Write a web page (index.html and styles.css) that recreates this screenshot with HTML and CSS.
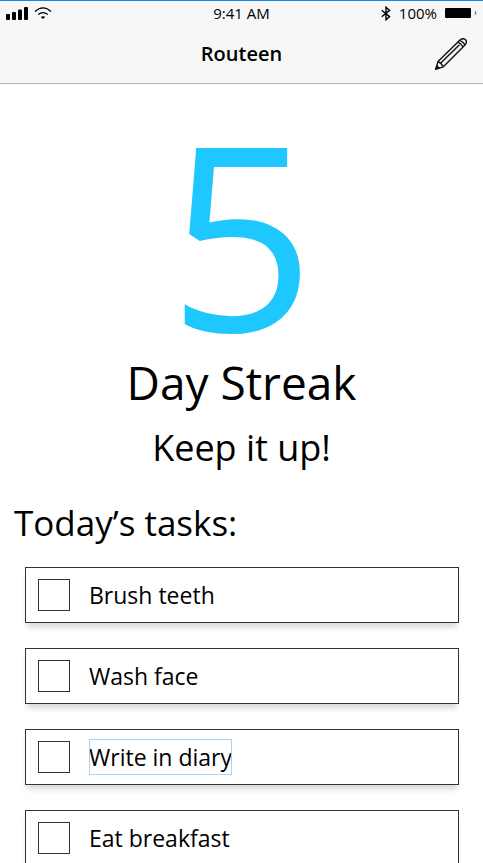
FILE: index.html
```html
<!DOCTYPE html>
<html lang="en">
<head>
<meta charset="utf-8">
<meta name="viewport" content="width=device-width, initial-scale=1">
<title>Routeen</title>
<link rel="stylesheet" href="styles.css">
</head>
<body>
<div class="screen">
  <header class="top">
    <div class="status">
      <div class="status-left">
        <svg width="22" height="13" viewBox="0 0 22 13" aria-hidden="true"><rect x="0" y="7" width="4" height="6" rx="1"/><rect x="6" y="5" width="4" height="8" rx="1"/><rect x="12" y="2.500" width="4" height="10.500" rx="1"/><rect x="18" y="0" width="4" height="13" rx="1"/></svg>
        <svg width="18" height="12" viewBox="0 0 18 12" fill="none" stroke="#000" stroke-width="1.300" aria-hidden="true"><path d="M1 4.600Q9-2.800 17 4.600M4.200 7.600Q9 3.600 13.800 7.600"/><path d="M6.800 9.900Q9 8.500 11.200 9.900L9 12Z" fill="#000" stroke="none"/></svg>
      </div>
      <span class="time">9:41 AM</span>
      <div class="status-right">
        <svg width="10" height="15" viewBox="0 0 10 15" fill="none" stroke="#000" stroke-width="1.400" aria-hidden="true"><path d="M.7 4.200 8.600 10.600 5 13.800V1.200L8.600 4.400.7 10.800"/></svg>
        <span class="percent">100%</span>
        <svg width="32" height="10" viewBox="0 0 32 10" aria-hidden="true"><rect width="26" height="10" rx="1"/><path d="M29.800 2.500Q33 5 29.800 7.500Z" fill="#777"/></svg>
      </div>
    </div>
    <div class="nav">
      <h1 class="title">Routeen</h1>
      <button class="edit" type="button" aria-label="Edit">
        <svg width="32" height="32" viewBox="0 0 32 32" fill="none" stroke="#111" stroke-width="1.400" stroke-linejoin="round" aria-hidden="true"><path d="M.8 31.200 3 23.500 25 2Q28-.5 30.500 1.700 32.500 4 30 7L8.300 28.800Z"/><path d="M3 23.500Q6.600 25 8.300 28.800M5.500 25.300 24.500 6.800M22.800 4.200Q26.400 5.500 28 9M24.800 2.300Q28.500 3.600 30 7"/><path d="M.8 31.200 1.800 27.700 4.300 30.200Z" fill="#111"/></svg>
      </button>
    </div>
  </header>
  <main class="content">
    <section class="streak">
      <p class="count">5</p>
      <p class="label">Day Streak</p>
      <p class="cheer">Keep it up!</p>
    </section>
    <h2 class="heading">Today’s tasks:</h2>
    <ul class="tasks">
      <li><label class="task"><input class="check" type="checkbox"><span class="name">Brush teeth</span></label></li>
      <li><label class="task"><input class="check" type="checkbox"><span class="name">Wash face</span></label></li>
      <li><label class="task"><input class="check" type="checkbox"><span class="name selected">Write in diary</span></label></li>
      <li><label class="task"><input class="check" type="checkbox"><span class="name">Eat breakfast</span></label></li>
    </ul>
  </main>
</div>
</body>
</html>
```
FILE: styles.css
```css
* { box-sizing: border-box; }
body, h1, h2, p, ul { margin: 0; padding: 0; }
body {
  background: #fff;
  color: #000;
  font-family: "Open Sans", "Noto Sans", sans-serif;
}
.screen {
  height: 100vh;
  overflow-y: auto;
  scrollbar-width: none;
}
.top {
  position: sticky;
  top: 0;
  z-index: 1;
  background: #f7f7f7;
  border-top: 1px solid #1a86e0;
  border-bottom: 1px solid #b2b2b2;
}
.status {
  display: grid;
  grid-template-columns: 1fr auto 1fr;
  align-items: center;
  height: 24px;
  padding: 0 6px;
  font-size: 15px;
  line-height: 24px;
}
.status svg { display: block; }
.status-left { display: flex; align-items: center; gap: 6px; }
.status-right { display: flex; align-items: center; justify-content: flex-end; gap: 8px; }
.nav {
  display: grid;
  grid-template-columns: 1fr auto 1fr;
  align-items: center;
  height: 58px;
  padding: 0 16px;
}
.title {
  grid-column: 2;
  font-size: 20px;
  line-height: 58px;
  font-weight: 600;
}
.edit {
  justify-self: end;
  padding: 0;
  border: 0;
  background: none;
}
.edit svg { display: block; }
.streak { padding-top: 24px; text-align: center; }
.count {
  color: #1ec8ff;
  font-size: 256px;
  line-height: 248px;
}
.label { font-size: 46px; line-height: 52px; }
.cheer { font-size: 36px; line-height: 80px; }
.heading {
  padding-left: 14px;
  font-size: 35px;
  line-height: 70px;
  font-weight: 400;
}
.tasks {
  display: grid;
  gap: 25px;
  padding: 9px 24px 25px 25px;
  list-style: none;
}
.task {
  display: flex;
  align-items: center;
  gap: 19px;
  height: 56px;
  padding: 0 12px;
  border: 1px solid #333;
  background: #fff;
  box-shadow: 0 6px 6px -2px rgba(0, 0, 0, .16);
}
.check {
  appearance: none;
  flex: none;
  width: 32px;
  height: 32px;
  margin: 0;
  border: 1px solid #333;
  background: #fff;
}
.check:checked { background: #1ec8ff; }
.name {
  font-size: 23px;
  line-height: 36px;
}
.selected { outline: 1px solid #a9d3f5; outline-offset: -1px; }
```
